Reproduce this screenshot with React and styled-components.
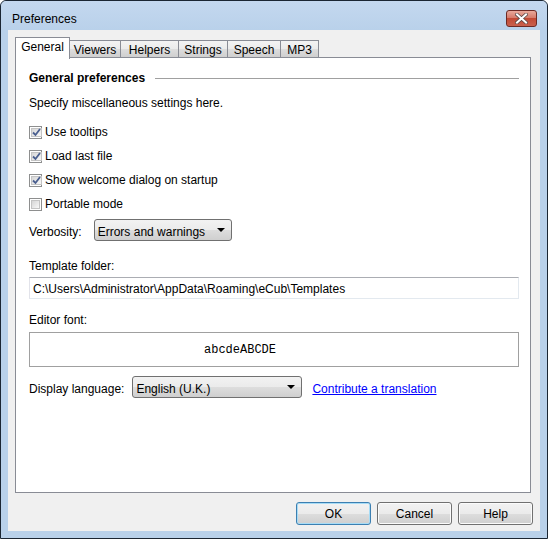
import React from 'react'
import styled, { createGlobalStyle } from 'styled-components'

const GlobalStyle = createGlobalStyle`
    html, body {
        margin: 0;
        padding: 0;
        background: #ffffff;
    }
    * {
        box-sizing: border-box;
    }
`;

const uiFont = `"Liberation Sans", Arial, sans-serif`;

const Window = styled.div`
    width: 548px;
    height: 539px;
    display: flex;
    flex-direction: column;
    border: 1px solid #1b2633;
    border-radius: 6px 6px 0 0;
    background: #b9d1ea;
    padding: 0 7px 7px;
    font-family: ${uiFont};
    font-size: 12px;
    color: #000;
    overflow: hidden;
`;
const TitleBar = styled.div`
    height: 29px;
    margin: 0 -7px;
    padding: 9px 10px 0 11px;
    display: flex;
    align-items: flex-start;
    justify-content: space-between;
    background: linear-gradient(#c4d8ef, #b9d1ea);
    border-radius: 5px 5px 0 0;
    span {
        line-height: 16px;
        padding-top: 1px;
    }
`;
const CloseButton = styled.div`
    width: 31px;
    height: 17px;
    border: 1px solid #6d2a24;
    border-radius: 3px;
    background: linear-gradient(#e9a99b 0%, #d67b6b 45%, #c24a35 50%, #c9604d 100%);
    display: flex;
    align-items: center;
    justify-content: center;
`;
const Client = styled.div`
    flex: 1;
    display: flex;
    flex-direction: column;
    background: #f0f0f0;
    padding: 7px 7px 6px 7px;
`;
const TabRow = styled.div`
    height: 21px;
    display: flex;
    align-items: flex-end;
    position: relative;
    z-index: 1;
`;
const Tab = styled.div`
    width: ${p => p.$w}px;
    height: ${p => (p.$active ? 22 : 18)}px;
    margin-left: ${p => (p.$first ? 0 : -1)}px;
    margin-bottom: ${p => (p.$active ? -1 : 0)}px;
    border: 1px solid #898c95;
    border-bottom: ${p => (p.$active ? 'none' : '1px solid #898c95')};
    background: ${p => (p.$active ? '#ffffff' : 'linear-gradient(#f3f3f3, #ebebeb 50%, #dddddd 51%, #cfcfcf)')};
    position: relative;
    z-index: ${p => (p.$active ? 2 : 1)};
    display: flex;
    justify-content: center;
    align-items: ${p => (p.$active ? 'flex-start' : 'center')};
    padding-top: ${p => (p.$active ? 2 : 1)}px;
`;
const Panel = styled.div`
    flex: 1;
    margin-right: 2px;
    margin-top: -1px;
    background: #ffffff;
    border: 1px solid #898c95;
    padding: 12px 11px 0 13px;
    display: flex;
    flex-direction: column;
`;
const Heading = styled.div`
    height: 16px;
    display: flex;
    align-items: center;
    gap: 10px;
    font-weight: bold;
    &::after {
        content: '';
        flex: 1;
        height: 1px;
        background: #a0a0a0;
    }
`;
const Text = styled.div`
    height: 16px;
    line-height: 16px;
    margin-top: ${p => p.$mt || 0}px;
`;
const CheckRow = styled.label`
    height: 24px;
    display: flex;
    align-items: center;
    gap: 3px;
    margin-top: ${p => p.$mt || 0}px;
`;
const Box = styled.span`
    width: 13px;
    height: 13px;
    border: 1px solid #8e8f8f;
    background: #ffffff;
    padding: 1px;
    display: flex;
    span {
        flex: 1;
        display: flex;
        align-items: center;
        justify-content: center;
        background: linear-gradient(135deg, #d6d6d6, #f8f8f8);
        border: 1px solid #c4c4c4;
    }
`;
const FieldRow = styled.div`
    height: 22px;
    display: flex;
    align-items: center;
    gap: ${p => p.$gap}px;
    margin-top: ${p => p.$mt || 0}px;
`;
const FieldLabel = styled.span`
    margin-top: 3px;
`;
const Select = styled.div`
    width: ${p => p.$w}px;
    height: 22px;
    border: 1px solid #707070;
    border-radius: 3px;
    background: linear-gradient(#f2f2f2, #ebebeb 50%, #dddddd 51%, #cfcfcf);
    display: flex;
    align-items: center;
    justify-content: space-between;
    padding: 3px 6px 0 3px;
    &::after {
        content: '';
        margin-top: -3px;
        border-left: 4px solid transparent;
        border-right: 4px solid transparent;
        border-top: 4px solid #000;
    }
`;
const Input = styled.div`
    height: 22px;
    margin-top: 3px;
    border: 1px solid #e3e9ef;
    border-top-color: #abadb3;
    border-left-color: #e2e3ea;
    background: #ffffff;
    display: flex;
    align-items: center;
    padding: 1px 0 0 3px;
    white-space: nowrap;
`;
const FontBox = styled.div`
    height: 35px;
    margin-top: 4px;
    border: 1px solid #a0a0a0;
    display: flex;
    align-items: center;
    padding-left: 174px;
    font-family: "Liberation Mono", "Courier New", monospace;
    font-size: 12px;
`;
const Link = styled.a`
    margin: 3px 0 0 2px;
    color: #0000ff;
    text-decoration: underline;
    cursor: pointer;
`;
const Footer = styled.div`
    height: 23px;
    margin-top: 9px;
    display: flex;
    justify-content: flex-end;
    gap: 6px;
`;
const Button = styled.div`
    width: 75px;
    height: 23px;
    border: 1px solid ${p => (p.$default ? '#3c7fb1' : '#707070')};
    border-radius: 3px;
    background: linear-gradient(#f2f2f2, #ebebeb 50%, #dddddd 51%, #cfcfcf);
    box-shadow: ${p => (p.$default ? 'inset 0 0 0 1px #a7dcf6' : 'inset 0 0 0 1px #fbfbfb')};
    display: flex;
    align-items: center;
    justify-content: center;
`;

const Check = () => (
    <svg width="9" height="9" viewBox="0 0 9 9">
        <path d="M1 4.5 L3.5 7 L8 1" fill="none" stroke="#4a5f8f" strokeWidth="1.8" />
    </svg>
);

const CheckBox = ({ checked }) => (
    <Box>
        <span>{checked && <Check />}</span>
    </Box>
);

const tabs = [
    { name: 'General', w: 55, active: true },
    { name: 'Viewers', w: 52 },
    { name: 'Helpers', w: 59 },
    { name: 'Strings', w: 50 },
    { name: 'Speech', w: 54 },
    { name: 'MP3', w: 39 },
];

const options = [
    { label: 'Use tooltips', checked: true },
    { label: 'Load last file', checked: true },
    { label: 'Show welcome dialog on startup', checked: true },
    { label: 'Portable mode', checked: false },
];

function App() {
    return (
        <Window>
            <GlobalStyle />
            <TitleBar>
                <span>Preferences</span>
                <CloseButton>
                    <svg width="13" height="11" viewBox="0 0 13 11">
                        <path d="M2 1.5 L11 9.5 M11 1.5 L2 9.5" stroke="#5a4a48" strokeWidth="3.6" strokeLinecap="square" />
                        <path d="M2 1.5 L11 9.5 M11 1.5 L2 9.5" stroke="#ffffff" strokeWidth="2" strokeLinecap="square" />
                    </svg>
                </CloseButton>
            </TitleBar>
            <Client>
                <TabRow>
                    {tabs.map((t, i) => (
                        <Tab key={t.name} $w={t.w} $active={t.active} $first={i === 0}>
                            {t.name}
                        </Tab>
                    ))}
                </TabRow>
                <Panel>
                    <Heading>General preferences</Heading>
                    <Text $mt={9}>Specify miscellaneous settings here.</Text>
                    {options.map((o, i) => (
                        <CheckRow key={o.label} $mt={i === 0 ? 9 : 0}>
                            <CheckBox checked={o.checked} />
                            {o.label}
                        </CheckRow>
                    ))}
                    <FieldRow $gap={12} $mt={3}>
                        <FieldLabel>Verbosity:</FieldLabel>
                        <Select $w={138}>Errors and warnings</Select>
                    </FieldRow>
                    <Text $mt={17}>Template folder:</Text>
                    <Input>C:\Users\Administrator\AppData\Roaming\eCub\Templates</Input>
                    <Text $mt={13}>Editor font:</Text>
                    <FontBox>abcdeABCDE</FontBox>
                    <FieldRow $gap={8} $mt={9}>
                        <FieldLabel>Display language:</FieldLabel>
                        <Select $w={170}>English (U.K.)</Select>
                        <Link>Contribute a translation</Link>
                    </FieldRow>
                </Panel>
                <Footer>
                    <Button $default>OK</Button>
                    <Button>Cancel</Button>
                    <Button>Help</Button>
                </Footer>
            </Client>
        </Window>
    )
}

export default App
